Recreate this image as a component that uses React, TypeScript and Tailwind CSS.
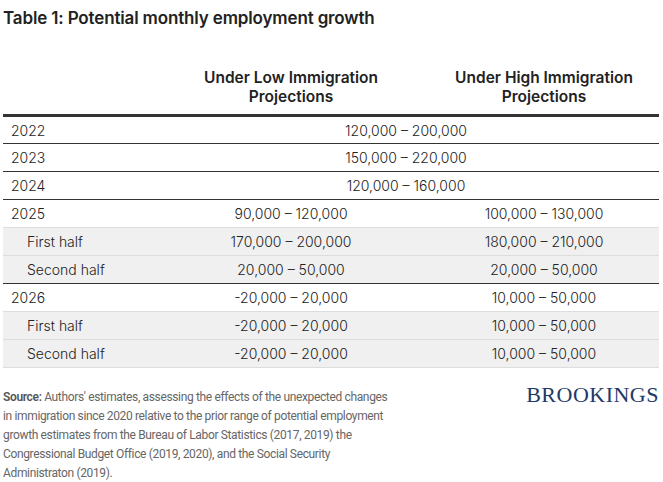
const rows: { label: string; low: string; high?: string; sub?: boolean; border: 'dark' | 'light' }[] = [
  { label: '2022', low: '120,000 – 200,000', border: 'dark' },
  { label: '2023', low: '150,000 – 220,000', border: 'dark' },
  { label: '2024', low: '120,000 – 160,000', border: 'dark' },
  { label: '2025', low: '90,000 – 120,000', high: '100,000 – 130,000', border: 'light' },
  { label: 'First half', low: '170,000 – 200,000', high: '180,000 – 210,000', sub: true, border: 'light' },
  { label: 'Second half', low: '20,000 – 50,000', high: '20,000 – 50,000', sub: true, border: 'dark' },
  { label: '2026', low: '-20,000 – 20,000', high: '10,000 – 50,000', border: 'light' },
  { label: 'First half', low: '-20,000 – 20,000', high: '10,000 – 50,000', sub: true, border: 'light' },
  { label: 'Second half', low: '-20,000 – 20,000', high: '10,000 – 50,000', sub: true, border: 'light' },
]

const sourceLines = [
  'in immigration since 2020 relative to the prior range of potential employment',
  'growth estimates from the Bureau of Labor Statistics (2017, 2019) the',
  'Congressional Budget Office (2019, 2020), and the Social Security',
  'Administraton (2019).',
]

export default function App() {
  return (
    <div className="w-[663px] h-[482px] bg-white overflow-hidden pl-[3px] pr-[4px] pt-[6px] font-['Inter',sans-serif] text-[#222]">
      <h1 className="text-[17px] leading-6 font-semibold tracking-[-0.15px] text-[#222]">Table 1: Potential monthly employment growth</h1>

      <table className="w-full mt-[38px] border-collapse text-[14px] font-light">
        <thead>
          <tr className="border-b-[3px] border-[#333]">
            <th className="w-[150px]" />
            <th className="w-[276px] pb-[8px] text-[15.5px] leading-[19px] font-semibold text-center">
              Under Low Immigration
              <br />
              Projections
            </th>
            <th className="pb-[8px] text-[15.5px] leading-[19px] font-semibold text-center">
              Under High Immigration
              <br />
              Projections
            </th>
          </tr>
        </thead>
        <tbody>
          {rows.map((r, i) => (
            <tr
              key={i}
              className={`h-[28px] border-b ${r.border === 'dark' ? 'border-[#333]' : 'border-[#ddd]'} ${r.sub ? 'bg-[#f0f0f0]' : ''}`}
            >
              <td className={r.sub ? 'pl-[24px]' : 'pl-[8px]'}>{r.label}</td>
              {r.high ? (
                <>
                  <td className="text-center">{r.low}</td>
                  <td className="text-center">{r.high}</td>
                </>
              ) : (
                <td colSpan={2} className="text-center">{r.low}</td>
              )}
            </tr>
          ))}
        </tbody>
      </table>

      <div className="flex justify-between mt-[20px]">
        <div className="font-['Roboto',sans-serif] text-[12px] leading-[19px] tracking-[-0.35px] text-[#666] whitespace-nowrap">
          <div>
            <span className="font-semibold text-[#555]">Source:</span> Authors' estimates, assessing the effects of the unexpected changes
          </div>
          {sourceLines.map((line) => (
            <div key={line}>{line}</div>
          ))}
        </div>
        <div className="font-['Liberation_Serif',serif] text-[22px] leading-none text-[#1f3a68] tracking-[0.5px] -mt-[4px]">BROOKINGS</div>
      </div>
    </div>
  )
}
